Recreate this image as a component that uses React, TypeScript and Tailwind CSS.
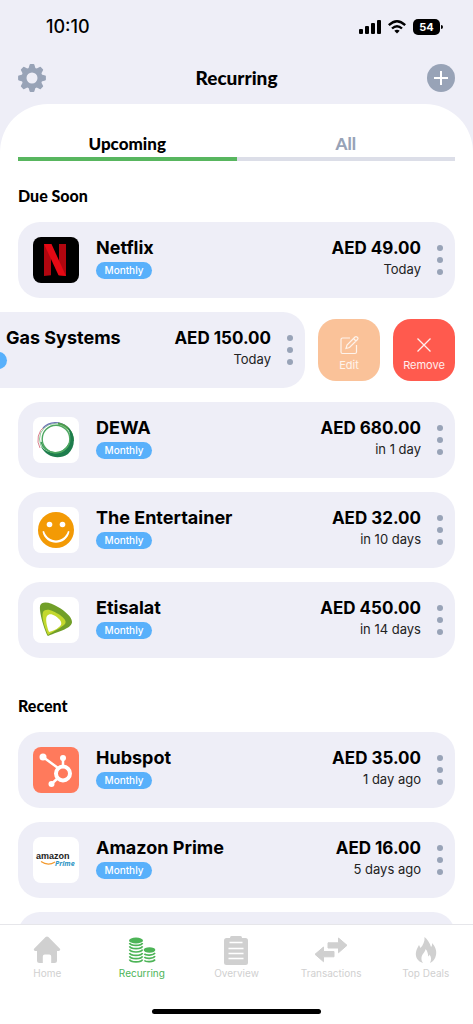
import type { ReactNode } from 'react'

type Item = {
  name: string
  amount: string
  when: string
  logo: ReactNode
  swiped?: boolean
}

function NetflixLogo() {
  return (
    <svg viewBox="0 0 46 46" className="size-full bg-black">
      <path d="M11 7h7v31.200l-7 .9z" fill="#b1060f" />
      <path d="M26 7h7v32l-7-.8z" fill="#b1060f" />
      <path d="M11 7h7.500L33 39l-7.500-.8z" fill="#e50914" />
    </svg>
  )
}

function DewaLogo() {
  return (
    <svg viewBox="0 0 46 46" className="size-full bg-white" fill="none">
      <circle cx="22" cy="22" r="15.500" stroke="#8fc79a" strokeWidth="1" />
      <path d="M7 31A17 17 0 0 1 12 9" stroke="#d9818f" strokeWidth="1" />
      <path d="M10 11A17 17 0 0 1 34 10" stroke="#6f74b5" strokeWidth="1.200" />
      <path d="M25 6.500A17 17 0 0 1 40 24" stroke="#4f9d4a" strokeWidth="1.800" />
      <path
        d="M34 9C43 17 43 30 35 37C26 43 14 41 7.500 29C13 36 24 38 31 32.500C38 27 39 17 34 9z"
        fill="#1e7d4d"
      />
      <path d="M8 25A15 15 0 0 0 36 27" stroke="#3f9c5c" strokeWidth="1.500" />
      <circle cx="23" cy="22" r="13.800" stroke="#4fa862" strokeWidth="1.400" />
    </svg>
  )
}

function EntertainerLogo() {
  return (
    <svg viewBox="0 0 46 46" className="size-full bg-white">
      <circle cx="23" cy="23" r="18" fill="#f39a05" />
      <circle cx="16.500" cy="17.500" r="2.800" fill="#fff" />
      <circle cx="29.500" cy="17.500" r="2.800" fill="#fff" />
      <path d="M9.500 24.500C12.500 39.500 33.500 39.500 36.500 24.500L35 24C31 36.500 15 36.500 11 24z" fill="#fff" />
    </svg>
  )
}

function EtisalatLogo() {
  return (
    <svg viewBox="0 0 46 46" className="size-full bg-white">
      <path d="M7 9C9 3 18 6 25 10C32 14 39 20 39 25C39 31 27 34 15 39C13 37 6 17 7 9z" fill="#719f28" />
      <path d="M10 15C13 10 21 14 27 18C31 21 34 24 32 27C28 31 21 34 15 38C12 31 8 20 10 15z" fill="#c3d82d" />
      <path d="M14 19C17 15 23 19 26 22C29 25 29 28 26 30C23 33 19 34 16 35C14 30 12 22 14 19z" fill="#fff" />
    </svg>
  )
}

function HubspotLogo() {
  return (
    <svg viewBox="0 0 46 46" className="size-full bg-[#ff7a5c]">
      <g stroke="#fff" fill="none">
        <circle cx="30" cy="26.500" r="7" strokeWidth="4" />
        <path d="M10 10L25 21M30 11v8M25 31L19 36.500" strokeWidth="2.500" />
      </g>
      <g fill="#fff">
        <circle cx="10" cy="10" r="3.500" />
        <circle cx="30" cy="11" r="3" />
        <circle cx="18.500" cy="37" r="3" />
      </g>
    </svg>
  )
}

function AmazonLogo() {
  return (
    <svg viewBox="0 0 46 46" className="size-full bg-white">
      <text x="3" y="22" className="font-['Liberation_Sans',sans-serif] text-[9px] font-bold" fill="#222">
        amazon
      </text>
      <path d="M8 24.500C13 28 18 27.500 22 25" stroke="#f39a2d" strokeWidth="1.200" fill="none" />
      <text x="22" y="29" className="font-['Open_Sans',sans-serif] text-[7px] font-bold italic" fill="#2b94c4">
        Prime
      </text>
    </svg>
  )
}

function GearIcon() {
  return (
    <svg viewBox="-14 -14 28 28" className="size-7" aria-hidden="true">
      <circle r="8" fill="none" stroke="currentColor" strokeWidth="5" />
      {[0, 45, 90, 135, 180, 225, 270, 315].map((a) => (
        <path
          key={a}
          d="M-3.500-9.500L-2.400-13.200Q-2.200-13.900-1.500-13.900H1.500Q2.200-13.900 2.400-13.200L3.500-9.500z"
          fill="currentColor"
          transform={`rotate(${a})`}
        />
      ))}
    </svg>
  )
}

function HomeIcon() {
  return (
    <svg viewBox="0 0 28 28" className="size-7" fill="currentColor" aria-hidden="true">
      <path d="M12.600 1.100a2 2 0 0 1 2.800 0L26.700 12.400c1 1 .4 2.600-1 2.600H24v9.500a2.500 2.500 0 0 1-2.500 2.500h-3.300V20.500a2 2 0 0 0-2-2h-4.400a2 2 0 0 0-2 2V27H6.500A2.500 2.500 0 0 1 4 24.500V15H2.300c-1.400 0-2-1.600-1-2.600z" />
    </svg>
  )
}

function CoinsIcon() {
  return (
    <svg viewBox="0 0 28 28" className="size-7" fill="none" stroke="currentColor" strokeWidth="1.700" aria-hidden="true">
      <ellipse cx="8" cy="4.500" rx="7" ry="3" fill="currentColor" stroke="none" />
      {[7, 10.300, 13.600, 16.900, 20.200, 23.500].map((y) => (
        <path key={y} d={`M1.500 ${y}C2.500 ${y + 3.200} 13.500 ${y + 3.200} 14.500 ${y}`} />
      ))}
      <ellipse cx="21.500" cy="14" rx="5.800" ry="2.700" fill="currentColor" stroke="none" />
      {[16.900, 20.200, 23.500].map((y) => (
        <path key={y} d={`M16.300 ${y + 1}C18 ${y + 2.700} 25.500 ${y + 2.700} 27 ${y}`} />
      ))}
    </svg>
  )
}

function ClipboardIcon() {
  return (
    <svg viewBox="0 0 24 29" className="h-[29px] w-6" aria-hidden="true">
      <rect y="2" width="24" height="27" rx="2.500" fill="currentColor" />
      <rect x="6" width="12" height="6" rx="1.500" fill="currentColor" />
      <path d="M5.500 6.500h13M4.500 12.500h15M4.500 17.500h15M4.500 22.500h15" stroke="#fff" strokeWidth="1.600" />
    </svg>
  )
}

function ArrowsIcon() {
  return (
    <svg viewBox="0 0 34 26" className="h-[26px] w-[34px]" fill="currentColor" stroke="currentColor" strokeLinejoin="round" aria-hidden="true">
      <path d="M14 5.800h10.500V1L33 8.300L24.500 15.700V11H14z" />
      <path d="M20 14.500H9.500V10L1 17.300L9.500 24.700V19.800H20z" />
    </svg>
  )
}

function FlameIcon() {
  return (
    <svg viewBox="0 0 24 28" className="h-7 w-6" fill="currentColor" aria-hidden="true">
      <path d="M10.500 1C13 3 16 7 17 11C18 10 18.300 8.500 18 7C21 10 23 14.500 22 19C21.300 23 19 25.500 16 27C17.500 24 17.500 21 15.500 18.500C15.200 19.500 15 20 14.200 20.500C14 17.500 13.500 15 11.500 13C11.500 16 8 18 7.500 21.500C7.200 24 8 25.500 9 27C4 25.500 1 21.500 2 16C2.500 13 4 11 5 9C5.500 10 6 11 6.500 12C9 9 11 5.500 10.500 1z" />
    </svg>
  )
}

function EditIcon() {
  return (
    <svg viewBox="0 0 20 20" className="size-5" fill="none" stroke="currentColor" strokeWidth="1.200" aria-hidden="true">
      <path d="M11 3H3.500Q2 3 2 4.500V17Q2 18.500 3.500 18.500H16Q17.500 18.500 17.500 17V10" />
      <path d="M7 13.500L8 10L16 2Q17 1 18.300 2.200T18.500 4.500L10.500 12.500zM14.500 3.500L17 6" />
    </svg>
  )
}

function StatusBar() {
  return (
    <div className="flex h-[52px] shrink-0 items-center justify-between pt-0.5 pr-[30px] pl-[46px] text-black">
      <span className="text-lg font-medium">10:10</span>
      <div className="flex items-center gap-[7px]">
        <svg viewBox="0 0 22 14" className="h-3.5 w-[22px]">
          <rect y="9" width="4" height="5" rx="1" />
          <rect x="6" y="6" width="4" height="8" rx="1" />
          <rect x="12" y="3" width="4" height="11" rx="1" />
          <rect x="18" width="4" height="14" rx="1" />
        </svg>
        <svg viewBox="0 0 18 14" className="h-3.5 w-[18px]" fill="none" stroke="#000" strokeWidth="2.400">
          <path d="M.8 5.200Q9-2.600 17.200 5.200M4 8.500Q9 3.800 14 8.500" />
          <path d="M6.300 10.800Q9 8.500 11.700 10.800L9 13.500z" fill="#000" stroke="none" />
        </svg>
        <div className="flex items-center gap-px">
          <span className="flex h-4 w-[27px] items-center justify-center rounded-[5px] bg-black text-[11px] font-bold text-white">
            54
          </span>
          <span className="h-1 w-0.5 rounded-r-full bg-black" />
        </div>
      </div>
    </div>
  )
}

function Card({ item }: { item: Item }) {
  return (
    <article className="flex h-[76px] w-full shrink-0 items-center rounded-[22px] bg-[#eeeef7] pr-3 pl-[15px]">
      <div className="size-[46px] shrink-0 overflow-hidden rounded-lg">{item.logo}</div>
      <div className="ml-[17px] flex flex-1 flex-col items-start gap-0.5 pb-[5px]">
        <h3 className={`text-lg leading-6 font-bold whitespace-nowrap ${item.swiped ? 'pl-[60px]' : ''}`}>
          {item.name}
        </h3>
        {item.swiped ? (
          <span className="h-[17px] w-[61px] rounded-full bg-[#58b0fb]" />
        ) : (
          <span className="flex h-[17px] w-14 items-center justify-center rounded-full bg-[#58b0fb] text-[10px] font-medium text-white">
            Monthly
          </span>
        )}
      </div>
      <div className="pb-[5px] text-right whitespace-nowrap">
        <p className="text-[17px] leading-6 font-bold">{item.amount}</p>
        <p className="text-[13px] leading-[19px] text-[#222]">{item.when}</p>
      </div>
      <button type="button" aria-label="More" className="ml-4 flex flex-col gap-1.5">
        <span className="size-1.5 rounded-full bg-[#98a3b7]" />
        <span className="size-1.5 rounded-full bg-[#98a3b7]" />
        <span className="size-1.5 rounded-full bg-[#98a3b7]" />
      </button>
    </article>
  )
}

function Row({ item }: { item: Item }) {
  return (
    <li className="flex items-center justify-end gap-[13px] overflow-hidden px-[18px]">
      <Card item={item} />
      {item.swiped && (
        <>
          <button
            type="button"
            className="flex size-[62px] shrink-0 flex-col items-center justify-end gap-0.5 rounded-[18px] bg-[#fac299] pb-2 text-[11px] text-white/80"
          >
            <EditIcon />
            Edit
          </button>
          <button
            type="button"
            className="flex size-[62px] shrink-0 flex-col items-center justify-end gap-0.5 rounded-[18px] bg-[#ff5a4e] pb-2 text-[11px] text-white/90"
          >
            <svg viewBox="0 0 20 20" className="size-5" stroke="currentColor" strokeWidth="1.300" aria-hidden="true">
              <path d="M3.500 3.500L16.500 16.500M16.500 3.500L3.500 16.500" />
            </svg>
            Remove
          </button>
        </>
      )}
    </li>
  )
}

const dueSoon: Item[] = [
  { name: 'Netflix', amount: 'AED 49.00', when: 'Today', logo: <NetflixLogo /> },
  { name: 'Gas Systems', amount: 'AED 150.00', when: 'Today', logo: null, swiped: true },
  { name: 'DEWA', amount: 'AED 680.00', when: 'in 1 day', logo: <DewaLogo /> },
  { name: 'The Entertainer', amount: 'AED 32.00', when: 'in 10 days', logo: <EntertainerLogo /> },
  { name: 'Etisalat', amount: 'AED 450.00', when: 'in 14 days', logo: <EtisalatLogo /> },
]

const recent: Item[] = [
  { name: 'Hubspot', amount: 'AED 35.00', when: '1 day ago', logo: <HubspotLogo /> },
  { name: 'Amazon Prime', amount: 'AED 16.00', when: '5 days ago', logo: <AmazonLogo /> },
]

const tabs = [
  { label: 'Home', icon: <HomeIcon /> },
  { label: 'Recurring', icon: <CoinsIcon />, active: true },
  { label: 'Overview', icon: <ClipboardIcon /> },
  { label: 'Transactions', icon: <ArrowsIcon /> },
  { label: 'Top Deals', icon: <FlameIcon /> },
]

export default function App() {
  return (
    <div className="flex h-screen flex-col bg-[#eeeef7] font-['Inter',sans-serif] text-black">
      <StatusBar />
      <header className="flex h-[52px] shrink-0 items-center justify-between px-[18px]">
        <button type="button" aria-label="Settings" className="text-[#98a3b7]">
          <GearIcon />
        </button>
        <h1 className="font-['Lato',sans-serif] text-[19px] font-black">Recurring</h1>
        <button type="button" aria-label="Add" className="flex size-7 items-center justify-center rounded-full bg-[#98a3b7]">
          <svg viewBox="0 0 14 14" className="size-3.5" stroke="#fff" strokeWidth="2">
            <path d="M7 0v14M0 7h14" />
          </svg>
        </button>
      </header>

      <main className="min-h-0 flex-1 overflow-hidden rounded-t-[48px] bg-white pt-[26px]">
        <div className="mx-[18px] grid grid-cols-2 font-['Lato',sans-serif] text-[17px] leading-[27px] font-black">
          <button type="button" className="border-b-4 border-[#58b65f]">
            Upcoming
          </button>
          <button type="button" className="border-b-4 border-[#dcdee8] text-[#98a3b7]">
            All
          </button>
        </div>

        <h2 className="mt-[23px] px-[18px] font-['Lato',sans-serif] text-base leading-6 font-black">Due Soon</h2>
        <ul className="mt-3.5 flex flex-col gap-3.5">
          {dueSoon.map((item) => (
            <Row key={item.name} item={item} />
          ))}
        </ul>

        <h2 className="mt-9 px-[18px] font-['Lato',sans-serif] text-base leading-6 font-black">Recent</h2>
        <ul className="mt-3.5 flex flex-col gap-3.5">
          {recent.map((item) => (
            <Row key={item.name} item={item} />
          ))}
          <li className="mx-[18px] h-[76px] rounded-[22px] bg-[#eeeef7]" />
        </ul>
      </main>

      <nav className="flex shrink-0 flex-col items-center border-t border-[#e6e6ea] bg-white pb-2.5">
        <div className="grid w-full grid-cols-5 pt-2.5">
          {tabs.map((tab) => (
            <a
              key={tab.label}
              href="#"
              className={`flex flex-col items-center text-[10px] leading-4 ${tab.active ? 'text-[#4db457]' : 'text-[#d0d0d0]'}`}
            >
              <span className="flex h-[30px] items-center">{tab.icon}</span>
              {tab.label}
            </a>
          ))}
        </div>
        <div className="mt-7 h-[5px] w-[169px] rounded-full bg-black" />
      </nav>
    </div>
  )
}
